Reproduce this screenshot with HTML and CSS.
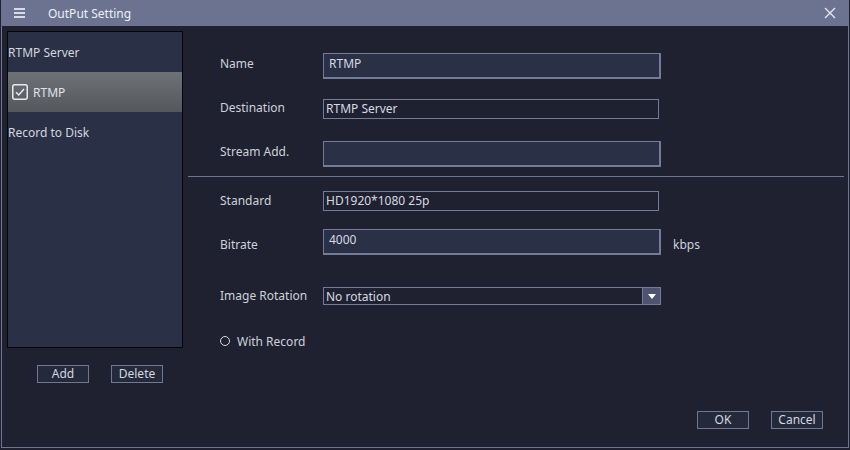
FILE: index.html
```html
<!DOCTYPE html>
<html>
<head>
<meta charset="utf-8">
<link rel="stylesheet" href="styles.css">
</head>
<body>
<div class="window">
  <div class="titlebar">
    <svg class="menu-icon" width="12" height="10" viewBox="0 0 12 10"><rect x="0" y="0" width="11" height="2" fill="#d8dce6"/><rect x="0" y="4" width="11" height="2" fill="#d8dce6"/><rect x="0" y="8" width="11" height="2" fill="#d8dce6"/></svg>
    <span class="title">OutPut Setting</span>
    <svg class="close-icon" width="12" height="12" viewBox="0 0 12 12"><path d="M1 1 L11 11 M11 1 L1 11" stroke="#e4e8f0" stroke-width="1.4"/></svg>
  </div>
  <div class="content">
    <div class="left">
      <div class="list">
        <div class="item">RTMP Server</div>
        <div class="item selected">
          <svg class="check" width="16" height="16" viewBox="0 0 16 16"><rect x="0.75" y="0.75" width="14.5" height="14.5" rx="2" fill="none" stroke="#e8eaee" stroke-width="1.5"/><path d="M4 8.2 L6.8 11 L12 5" fill="none" stroke="#e8eaee" stroke-width="1.5"/></svg>
          <span>RTMP</span>
        </div>
        <div class="item">Record to Disk</div>
      </div>
      <div class="list-buttons">
        <button class="btn">Add</button>
        <button class="btn">Delete</button>
      </div>
    </div>
    <div class="right">
      <div class="row r-name">
        <label class="lbl up3">Name</label>
        <div class="field filled tall">RTMP</div>
      </div>
      <div class="row r-dest">
        <label class="lbl up2">Destination</label>
        <div class="field short">RTMP Server</div>
      </div>
      <div class="row r-stream">
        <label class="lbl up3">Stream Add.</label>
        <div class="field filled tall"></div>
      </div>
      <div class="separator"></div>
      <div class="row r-std">
        <label class="lbl up1">Standard</label>
        <div class="field short">HD1920*1080 25p</div>
      </div>
      <div class="row r-bitrate">
        <label class="lbl down2">Bitrate</label>
        <div class="field filled tall">4000</div>
        <span class="unit down2">kbps</span>
      </div>
      <div class="row r-rot">
        <label class="lbl up1">Image Rotation</label>
        <div class="combo">
          <span class="combo-text">No rotation</span>
          <span class="combo-arrow"><svg width="8" height="5" viewBox="0 0 8 5"><path d="M0 0 L8 0 L4 5 Z" fill="#ffffff"/></svg></span>
        </div>
      </div>
      <div class="row r-rec">
        <span class="radio"></span>
        <span class="rec-label">With Record</span>
      </div>
      <div class="footer">
        <button class="btn">OK</button>
        <button class="btn">Cancel</button>
      </div>
    </div>
  </div>
</div>
</body>
</html>
```
FILE: styles.css
```css
html, body {
  margin: 0;
  padding: 0;
  background: #1f2130;
}
body {
  font-family: "Noto Sans", "Liberation Sans", sans-serif;
  font-size: 12px;
  color: #cdd1db;
}
.window {
  width: 846px;
  height: 447px;
  margin-left: 1px;
  border: 1px solid #6d7591;
  border-top: none;
  display: flex;
  flex-direction: column;
  background: #1f2130;
}
.titlebar {
  height: 26px;
  margin: 0 -1px;
  background: #6b7391;
  display: flex;
  align-items: center;
  flex-shrink: 0;
}
.menu-icon {
  margin-left: 13px;
}
.title {
  margin-left: 22px;
  color: #eef0f6;
  font-size: 12px;
}
.close-icon {
  margin-left: auto;
  margin-right: 13px;
}
.content {
  flex: 1;
  display: flex;
}
.left {
  width: 186px;
  padding-left: 5px;
  padding-top: 5px;
  box-sizing: border-box;
  flex-shrink: 0;
}
.list {
  width: 176px;
  height: 317px;
  box-sizing: border-box;
  border: 1px solid #05060a;
  background: #2a3045;
}
.item {
  height: 40px;
  display: flex;
  align-items: center;
  padding-left: 0;
  color: #d2d6de;
}
.item.selected {
  background: linear-gradient(#6e7176, #54575c);
  padding-left: 4px;
  color: #e0e3ea;
}
.check {
  margin-right: 5px;
}
.list-buttons {
  display: flex;
  gap: 22px;
  padding-left: 30px;
  margin-top: 17px;
}
.btn {
  width: 52px;
  height: 18px;
  box-sizing: border-box;
  border: 1px solid #6f7793;
  background: #252a3b;
  color: #d4d8e0;
  font-family: inherit;
  font-size: 12px;
  padding: 0;
  line-height: 14px;
}
.right {
  flex: 1;
  display: flex;
  flex-direction: column;
  padding-top: 27px;
  padding-right: 4px;
}
.row {
  display: flex;
  align-items: center;
  padding-left: 32px;
}
.lbl {
  width: 103px;
  color: #cdd1db;
}
.up1 { padding-bottom: 2px; }
.up2 { padding-bottom: 4px; }
.up3 { padding-bottom: 6px; }
.down2 { padding-top: 4px; }
.field {
  box-sizing: border-box;
  border: 1px solid #737b97;
  color: #d6d9e2;
}
.field.tall {
  width: 338px;
  height: 26px;
  background: #2a3045;
  padding: 2px 5px;
  border-width: 1px 2px 2px 1px;
  line-height: 16px;
}
.field.short {
  width: 336px;
  height: 20px;
  padding: 0 2px;
  line-height: 18px;
}
.r-name { height: 26px; }
.r-dest { height: 20px; margin-top: 20px; }
.r-stream { height: 26px; margin-top: 22px; }
.separator {
  height: 1px;
  background: #6d7591;
  margin-top: 9px;
}
.r-std { height: 20px; margin-top: 14px; }
.r-bitrate { height: 26px; margin-top: 18px; }
.unit {
  margin-left: 12px;
  color: #cdd1db;
}
.r-rot { height: 18px; margin-top: 32px; }
.combo {
  width: 338px;
  height: 18px;
  box-sizing: border-box;
  border: 1px solid #737b97;
  display: flex;
  align-items: center;
}
.combo-text {
  flex: 1;
  padding-left: 2px;
  color: #d6d9e2;
}
.combo-arrow {
  width: 17px;
  height: 16px;
  background: #4e5470;
  border-left: 1px solid #737b97;
  display: flex;
  align-items: center;
  justify-content: center;
}
.r-rec { height: 18px; margin-top: 27px; }
.radio {
  width: 8px;
  height: 8px;
  border: 1px solid #d6d9e2;
  border-radius: 50%;
  margin-right: 7px;
}
.rec-label {
  color: #cdd1db;
}
.footer {
  display: flex;
  gap: 22px;
  justify-content: flex-end;
  padding-right: 21px;
  margin-top: 61px;
}
```
